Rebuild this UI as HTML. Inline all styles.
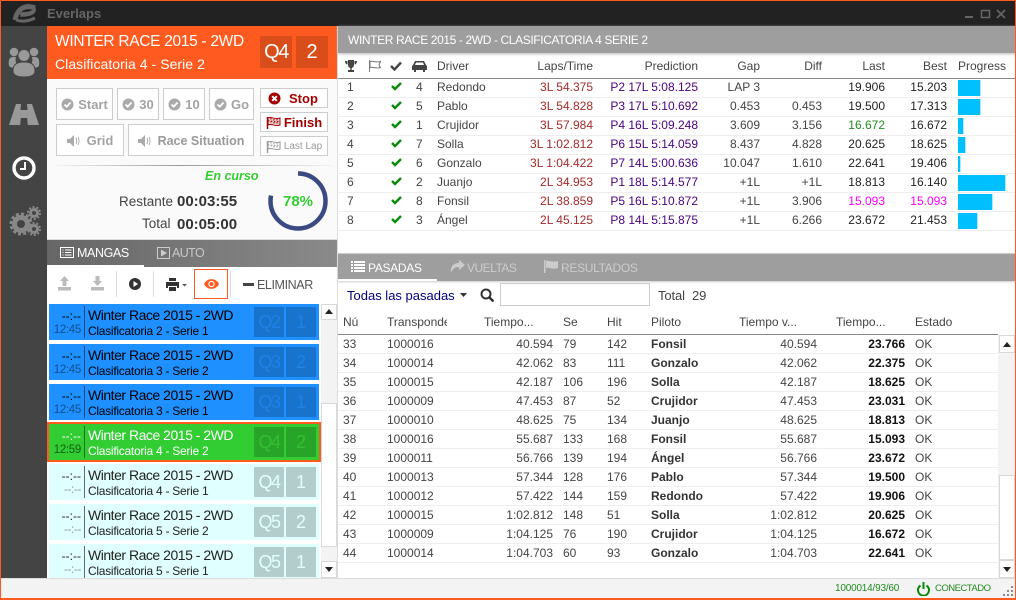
<!DOCTYPE html>
<html><head><meta charset="utf-8"><style>
*{box-sizing:border-box;margin:0;padding:0}
html,body{width:1016px;height:600px;overflow:hidden;background:#fff}
body{position:relative;font:12px "Liberation Sans",sans-serif;color:#444}
.a{position:absolute;white-space:nowrap}
.btn{position:absolute;background:#fff;border:1px solid #ccc;color:#a3a3a3;font-weight:bold;font-size:13px;display:flex;align-items:center;justify-content:center;white-space:nowrap;padding-top:1px}
.row{position:absolute;left:338px;height:19px;line-height:17px;border-bottom:1px solid #eee}
.row span,.h span{position:absolute;top:0;white-space:nowrap}
.t{width:678px}
.p{width:660px;line-height:18px}
.t .c1{left:9px}
.t svg{position:absolute;left:53px;top:3px}
.t .c2{left:78px}
.t .c3{left:99px}
.t .c4{right:423px;color:#a52a2a}
.t .c5{right:318px;color:#4b0082}
.t .c6{right:256px}
.t .c7{right:194px}
.t .c8{right:131px;color:#222}
.t .c9{right:69px;color:#222}
.t i{position:absolute;left:620px;top:1px;height:16px;background:#00bfff;border-right:1px solid #aee8ff}
.p span:nth-child(1){left:5px}
.p span:nth-child(2){left:49px}
.p span:nth-child(3){right:445px}
.p span:nth-child(4){left:225px}
.p span:nth-child(5){left:269px}
.p span:nth-child(6){left:313px;font-weight:bold;color:#333}
.p span:nth-child(7){right:181px}
.p span:nth-child(8){right:93px;font-weight:bold;color:#111}
.p span:nth-child(9){left:577px}
.h span{color:#444;line-height:16px}
.it{position:absolute;left:49px;width:270px;height:36px;overflow:hidden}
.it b{position:absolute;font-weight:normal;white-space:nowrap}
.it .x{left:0;width:32px;top:5px;text-align:right;font-size:12px}
.it .y{left:0;width:32px;top:20px;text-align:right;font-size:11.5px;letter-spacing:-.3px}
.it .l{left:35px;top:2px;width:1px;height:32px}
.it .n{left:39px;top:3px;font-size:14px;letter-spacing:-.48px}
.it .s{left:39px;top:20px;font-size:12px;letter-spacing:-.27px}
.it .q{top:3px;left:205px;width:30px;height:30px;text-align:center;font-size:18px;line-height:30px;letter-spacing:-1.5px}
.it .m{top:3px;left:237px;width:30px;height:30px;text-align:center;font-size:18px;line-height:30px}
.bl{background:#1e90ff;color:#000}.bl .y{color:#134f8c}.bl .l{background:#0f4a85}.bl .q,.bl .m{background:#1873cc;color:#1e82e8}
.gr{background:#32cd32;color:#fff}.gr .y{color:#156015}.gr .l{background:#197019}.gr .q,.gr .m{background:#28a428;color:#32c032}
.li{background:#e0ffff;color:#222}.li .y{color:#8a9a9a}.li .l{background:#667}.li .q,.li .m{background:#b3cccc;color:#e0ffff}
.sb{position:absolute;background:#fff;border:1px solid #d8d8d8}
</style></head><body>

<!-- title bar -->
<div class="a" style="left:0;top:0;width:1016px;height:26px;background:#222"></div>
<svg class="a" style="left:12px;top:4px" width="26" height="19" viewBox="0 0 26 19" fill="none" stroke="#666"><path d="M23 4C13 0 5 5 3 16" stroke-width="5"/><path d="M9 9C14 9 20 8 23 5C24 10 17 12 9 12Z" fill="#666" stroke-width="1.500"/><path d="M4 16C10 18 17 17 23 14" stroke-width="3"/></svg>
<div class="a" style="left:47px;top:6px;font-size:13px;font-weight:bold;color:#666">Everlaps</div>
<svg class="a" style="left:965px;top:8px" width="46" height="12" viewBox="0 0 46 12" fill="none" stroke="#666"><rect x="0" y="8" width="8" height="2" fill="#666" stroke="none"/><rect x="16.500" y="2.500" width="8" height="7" stroke-width="1.500"/><path d="M32 2L40 10M40 2L32 10" stroke-width="1.600"/></svg>

<!-- sidebar -->
<div class="a" style="left:0;top:26px;width:47px;height:552px;background:#444"></div>
<svg class="a" style="left:8px;top:46px" width="32" height="32" viewBox="0 0 32 32" fill="#999"><circle cx="6" cy="6" r="4.300"/><circle cx="26" cy="6" r="4.300"/><path d="M1 20C0 13 2 11 5 11L8 11C7 15 8 18 10 19L7 22C4 22 2 21 1 20ZM31 20C32 13 30 11 27 11L24 11C25 15 24 18 22 19L25 22C28 22 30 21 31 20Z"/><circle cx="16" cy="9.500" r="6" stroke="#444"/><path d="M16 16C8 16 5 19 5 25C5 29 9 31 16 31C23 31 27 29 27 25C27 19 24 16 16 16Z" stroke="#444"/></svg>
<svg class="a" style="left:9px;top:104px" width="30" height="22" viewBox="0 0 30 22" fill="#999"><path d="M7 0H12L11.500 6H18.500L18 0H23L30 21H18.800L18.200 14H11.800L11.200 21H0Z"/></svg>
<svg class="a" style="left:12px;top:156px" width="24" height="24" viewBox="0 0 24 24" fill="none"><circle cx="12" cy="12" r="10" stroke="#fff" stroke-width="3.400"/><path d="M13 6V13H8" stroke="#fff" stroke-width="2"/></svg>
<svg class="a" style="left:9px;top:206px" width="32" height="30" viewBox="0 0 32 30" fill="none" stroke="#888"><circle cx="12" cy="18" r="6.500" stroke-width="5"/><circle cx="12" cy="18" r="10" stroke-width="3" stroke-dasharray="3 2.200"/><circle cx="25" cy="7" r="3.500" stroke-width="3"/><circle cx="25" cy="7" r="6" stroke-width="2" stroke-dasharray="2 1.800"/><circle cx="25" cy="23" r="3.500" stroke-width="3"/><circle cx="25" cy="23" r="6" stroke-width="2" stroke-dasharray="2 1.800"/></svg>

<!-- orange header -->
<div class="a" style="left:47px;top:26px;width:290px;height:53px;background:#ff5a1f"></div>
<div class="a" style="left:55px;top:33px;font-size:15.500px;color:#fff;letter-spacing:-.3px">WINTER RACE 2015 - 2WD</div>
<div class="a" style="left:55px;top:56px;font-size:14px;color:#fff;letter-spacing:.05px">Clasificatoria 4 - Serie 2</div>
<div class="a" style="left:260px;top:36px;width:32px;height:32px;background:#d94d1a;color:#fff;font-size:20px;text-align:center;line-height:33px;letter-spacing:-1.5px">Q4</div>
<div class="a" style="left:296px;top:36px;width:32px;height:32px;background:#d94d1a;color:#fff;font-size:20px;text-align:center;line-height:33px">2</div>

<!-- control panel -->
<div class="a" style="left:47px;top:79px;width:290px;height:161px;background:#fafafa;border-bottom:1px solid #ddd"></div>
<div class="btn" style="left:56px;top:88px;width:57px;height:32px"><svg width="13" height="13" viewBox="0 0 13 13" style="margin-right:4px"><circle cx="6.500" cy="6.500" r="6" fill="#aaa"/><path d="M3.500 6.500L5.700 8.700L9.500 4.500" stroke="#fff" stroke-width="1.800" fill="none"/></svg>Start</div>
<div class="btn" style="left:117px;top:88px;width:42px;height:32px"><svg width="13" height="13" viewBox="0 0 13 13" style="margin-right:4px"><circle cx="6.500" cy="6.500" r="6" fill="#aaa"/><path d="M3.500 6.500L5.700 8.700L9.500 4.500" stroke="#fff" stroke-width="1.800" fill="none"/></svg>30</div>
<div class="btn" style="left:163px;top:88px;width:42px;height:32px"><svg width="13" height="13" viewBox="0 0 13 13" style="margin-right:4px"><circle cx="6.500" cy="6.500" r="6" fill="#aaa"/><path d="M3.500 6.500L5.700 8.700L9.500 4.500" stroke="#fff" stroke-width="1.800" fill="none"/></svg>10</div>
<div class="btn" style="left:209px;top:88px;width:45px;height:32px"><svg width="13" height="13" viewBox="0 0 13 13" style="margin-right:4px"><circle cx="6.500" cy="6.500" r="6" fill="#aaa"/><path d="M3.500 6.500L5.700 8.700L9.500 4.500" stroke="#fff" stroke-width="1.800" fill="none"/></svg>Go</div>
<div class="btn" style="left:56px;top:124px;width:68px;height:32px"><svg width="14" height="12" viewBox="0 0 14 12" style="margin-right:6px" fill="none" stroke="#aaa"><path d="M0 4H3L7 0V12L3 8H0Z" fill="#aaa" stroke="none"/><path d="M9 3C10 5 10 7 9 9M11 2C12.500 5 12.500 7 11 10"/></svg>Grid</div>
<div class="btn" style="left:128px;top:124px;width:126px;height:32px;color:#999;font-size:12.500px"><svg width="14" height="12" viewBox="0 0 14 12" style="margin-right:6px" fill="none" stroke="#aaa"><path d="M0 4H3L7 0V12L3 8H0Z" fill="#aaa" stroke="none"/><path d="M9 3C10 5 10 7 9 9M11 2C12.500 5 12.500 7 11 10"/></svg>Race Situation</div>
<div class="btn" style="left:260px;top:88px;width:68px;height:20px;color:#a50000;justify-content:flex-start;padding-left:7px"><svg width="13" height="13" viewBox="0 0 13 13" style="margin-right:8px"><circle cx="6.500" cy="6.500" r="6" fill="#a50000"/><path d="M4.200 4.200L8.800 8.800M8.800 4.200L4.200 8.800" stroke="#fff" stroke-width="2"/></svg>Stop</div>
<div class="btn" style="left:260px;top:112px;width:68px;height:20px;color:#a50000"><svg width="15" height="14" viewBox="0 0 15 14" style="margin-right:3px" fill="none" stroke="#a50000"><path d="M1.500 1V13" stroke-width="1.500"/><path d="M2 2C5 0 9 4 14 2V9C9 11 5 7 2 9Z" fill="#a50000" fill-opacity=".2"/><path d="M5 2V8M8 3V9M11 3V9M2 5C5 4 9 7 14 5" stroke-dasharray="1.500 1.500"/></svg>Finish</div>
<div class="btn" style="left:260px;top:136px;width:68px;height:20px;color:#999;font-size:10px;font-weight:normal"><svg width="15" height="14" viewBox="0 0 15 14" style="margin-right:3px" fill="none" stroke="#999"><path d="M1.500 1V13" stroke-width="1.500"/><path d="M2 2C5 0 9 4 14 2V9C9 11 5 7 2 9Z"/><path d="M5 2V8M8 3V9M11 3V9M2 5C5 4 9 7 14 5" stroke-dasharray="1.500 1.500"/></svg>Last Lap</div>
<div class="a" style="left:56px;top:165px;width:278px;height:1px;background:linear-gradient(90deg,#f4f4f4,#999 45%,#f4f4f4)"></div>
<div class="a" style="left:205px;top:169px;font-size:12.500px;font-weight:bold;font-style:italic;color:#32cd32">En curso</div>
<div class="a" style="left:119px;top:194px;font-size:13.500px;color:#444">Restante</div>
<div class="a" style="left:177px;top:193px;font-size:15px;font-weight:bold;color:#333">00:03:55</div>
<div class="a" style="left:142px;top:216px;font-size:13.500px;color:#444">Total</div>
<div class="a" style="left:177px;top:216px;font-size:15px;font-weight:bold;color:#333">00:05:00</div>
<svg class="a" style="left:268px;top:171px" width="60" height="60" viewBox="0 0 60 60"><circle cx="30" cy="30" r="27.500" fill="none" stroke="#3b4a82" stroke-width="4.500" stroke-dasharray="134.800 38" transform="rotate(-90 30 30)"/></svg>
<div class="a" style="left:268px;top:193px;width:60px;text-align:center;font-size:15px;font-weight:bold;color:#32cd32">78%</div>

<!-- mangas tabs -->
<div class="a" style="left:47px;top:240px;width:290px;height:27px;background:linear-gradient(90deg,#666,#8a8a8a)"></div>
<div class="a" style="left:47px;top:265px;width:97px;height:2px;background:#fff"></div>
<svg class="a" style="left:60px;top:247px" width="14" height="11" viewBox="0 0 14 11" fill="none" stroke="#fff"><rect x=".5" y=".5" width="13" height="10"/><path d="M2.500 3H3.500M5 3H11.500M2.500 5.500H3.500M5 5.500H11.500M2.500 8H3.500M5 8H11.500"/></svg>
<div class="a" style="left:77px;top:246px;font-size:12.500px;color:#fff;letter-spacing:-.4px">MANGAS</div>
<svg class="a" style="left:157px;top:247px" width="13" height="12" viewBox="0 0 13 12"><rect x=".5" y=".5" width="12" height="11" fill="none" stroke="#ccc"/><path d="M4 2.500V9.500L10 6Z" fill="#ccc"/></svg>
<div class="a" style="left:172px;top:246px;font-size:12.500px;color:#c8c8c8;letter-spacing:-.6px">AUTO</div>

<!-- toolbar -->
<div class="a" style="left:47px;top:267px;width:290px;height:311px;background:#fff"></div>
<svg class="a" style="left:57px;top:276px" width="15" height="15" viewBox="0 0 15 15" fill="#bbb"><path d="M7.500 0L12 5H9.500V10H5.500V5H3Z"/><rect x="1" y="11" width="13" height="3.500"/></svg>
<svg class="a" style="left:90px;top:276px" width="15" height="15" viewBox="0 0 15 15" fill="#bbb"><path d="M7.500 10L12 5H9.500V0H5.500V5H3Z"/><rect x="1" y="11" width="13" height="3.500"/></svg>
<div class="a" style="left:116px;top:271px;width:1px;height:26px;background:#ddd"></div>
<svg class="a" style="left:129px;top:278px" width="12" height="12" viewBox="0 0 12 12"><circle cx="6" cy="6" r="6" fill="#333"/><path d="M4.500 3L9 6L4.500 9Z" fill="#fff"/></svg>
<div class="a" style="left:153px;top:271px;width:1px;height:26px;background:#ddd"></div>
<svg class="a" style="left:166px;top:278px" width="22" height="13" viewBox="0 0 22 13"><path d="M3 0H10V3H3ZM0 4H13V10H11V8H2V10H0ZM3 9H10V13H3Z" fill="#333"/><path d="M16 6H21L18.500 8.500Z" fill="#555"/></svg>
<div class="a" style="left:194px;top:269px;width:34px;height:30px;border:1px solid #ff5a1f"></div>
<svg class="a" style="left:204px;top:279px" width="15" height="10" viewBox="0 0 15 10"><path d="M0 5C3-1.500 12-1.500 15 5C12 11.500 3 11.500 0 5Z" fill="#ff5a1f"/><circle cx="7.500" cy="5" r="3.200" fill="#fff"/><circle cx="7.500" cy="5" r="2" fill="#ff5a1f"/></svg>
<div class="a" style="left:230px;top:271px;width:1px;height:26px;background:#ddd"></div>
<div class="a" style="left:243px;top:283px;width:11px;height:3px;background:#444"></div>
<div class="a" style="left:257px;top:278px;font-size:12.500px;color:#555;letter-spacing:-.4px">ELIMINAR</div>

<!-- list -->
<div class="it bl" style="top:304px"><b class="x">--:--</b><b class="y">12:45</b><b class="l"></b><b class="n">Winter Race 2015 - 2WD</b><b class="s">Clasificatoria 2 - Serie 1</b><b class="q">Q2</b><b class="m">1</b></div>
<div class="it bl" style="top:344px"><b class="x">--:--</b><b class="y">12:45</b><b class="l"></b><b class="n">Winter Race 2015 - 2WD</b><b class="s">Clasificatoria 3 - Serie 2</b><b class="q">Q3</b><b class="m">2</b></div>
<div class="it bl" style="top:384px"><b class="x">--:--</b><b class="y">12:45</b><b class="l"></b><b class="n">Winter Race 2015 - 2WD</b><b class="s">Clasificatoria 3 - Serie 1</b><b class="q">Q3</b><b class="m">1</b></div>
<div class="a" style="left:47px;top:422px;width:274px;height:40px;border:2px solid #ff5a1f"></div>
<div class="it gr" style="top:424px"><b class="x">--:--</b><b class="y">12:59</b><b class="l"></b><b class="n">Winter Race 2015 - 2WD</b><b class="s">Clasificatoria 4 - Serie 2</b><b class="q">Q4</b><b class="m">2</b></div>
<div class="it li" style="top:464px"><b class="x">--:--</b><b class="y">--:--</b><b class="l"></b><b class="n">Winter Race 2015 - 2WD</b><b class="s">Clasificatoria 4 - Serie 1</b><b class="q">Q4</b><b class="m">1</b></div>
<div class="it li" style="top:504px"><b class="x">--:--</b><b class="y">--:--</b><b class="l"></b><b class="n">Winter Race 2015 - 2WD</b><b class="s">Clasificatoria 5 - Serie 2</b><b class="q">Q5</b><b class="m">2</b></div>
<div class="it li" style="top:544px;height:34px"><b class="x">--:--</b><b class="y">--:--</b><b class="l"></b><b class="n">Winter Race 2015 - 2WD</b><b class="s">Clasificatoria 5 - Serie 1</b><b class="q">Q5</b><b class="m">1</b></div>
<div class="a" style="left:321px;top:304px;width:16px;height:274px;background:#f3f3f3"></div>
<div class="sb" style="left:321px;top:304px;width:16px;height:16px"></div>
<div class="sb" style="left:321px;top:403px;width:16px;height:144px"></div>
<div class="sb" style="left:321px;top:561px;width:16px;height:17px"></div>
<svg class="a" style="left:325px;top:309px" width="8" height="5"><path d="M0 5H8L4 0Z" fill="#222"/></svg>
<svg class="a" style="left:325px;top:567px" width="8" height="5"><path d="M0 0H8L4 5Z" fill="#222"/></svg>

<!-- right header -->
<div class="a" style="left:337px;top:26px;width:1px;height:552px;background:#ddd"></div>
<div class="a" style="left:338px;top:26px;width:678px;height:27px;background:#9e9e9e;box-shadow:0 1px 3px #bbb"></div>
<div class="a" style="left:348px;top:33px;font-size:12px;color:#fff;letter-spacing:-.38px">WINTER RACE 2015 - 2WD - CLASIFICATORIA 4 SERIE 2</div>

<!-- top table head -->
<div class="h a" style="left:338px;top:58px;width:678px;height:21px;border-bottom:1px solid #888">
<svg style="position:absolute;left:7px;top:2px" width="12" height="12" viewBox="0 0 12 12" fill="#444"><path d="M3 0H9V5C9 7 7 8 6.700 8V10H9V12H3V10H5.300V8C5 8 3 7 3 5ZM0 1H2.500V4.500C1 4.500 0 3 0 1ZM12 1H9.500V4.500C11 4.500 12 3 12 1Z"/></svg>
<svg style="position:absolute;left:30px;top:2px" width="13" height="12" viewBox="0 0 13 12" fill="none" stroke="#777"><path d="M1.500 0V12M2 1.500C5 .5 8 3 12.500 1.500L11 5L12.500 7.500C8 9 5 6.500 2 7.500Z"/></svg>
<svg style="position:absolute;left:52px;top:3px" width="12" height="10" viewBox="0 0 12 10"><path d="M1 5L4.500 8.500L11 1.500" stroke="#444" stroke-width="2.400" fill="none"/></svg>
<svg style="position:absolute;left:74px;top:2px" width="15" height="12" viewBox="0 0 15 12" fill="#444"><path fill-rule="evenodd" d="M3 1H12L14 5L15 6V10H13V12H11V10H4V12H2V10H0V6L1 5ZM4 2.500L3 5H12L11 2.500Z"/></svg>
<span style="left:99px">Driver</span><span style="right:423px">Laps/Time</span><span style="right:318px">Prediction</span><span style="right:256px">Gap</span><span style="right:194px">Diff</span><span style="right:131px">Last</span><span style="right:69px">Best</span><span style="left:620px">Progress</span></div>

<!-- top table rows -->
<div class="row t" style="top:79px"><span class="c1">1</span><svg width="11" height="9" viewBox="0 0 11 9"><path d="M1 4L4 7L10 1" stroke="#0a8a0a" stroke-width="2.400" fill="none"/></svg><span class="c2">4</span><span class="c3">Redondo</span><span class="c4">3L 54.375</span><span class="c5">P2 17L 5:08.125</span><span class="c6">LAP 3</span><span class="c8">19.906</span><span class="c9">15.203</span><i style="width:23px"></i></div>
<div class="row t" style="top:98px"><span class="c1">2</span><svg width="11" height="9" viewBox="0 0 11 9"><path d="M1 4L4 7L10 1" stroke="#0a8a0a" stroke-width="2.400" fill="none"/></svg><span class="c2">5</span><span class="c3">Pablo</span><span class="c4">3L 54.828</span><span class="c5">P3 17L 5:10.692</span><span class="c6">0.453</span><span class="c7">0.453</span><span class="c8">19.500</span><span class="c9">17.313</span><i style="width:23px"></i></div>
<div class="row t" style="top:117px"><span class="c1">3</span><svg width="11" height="9" viewBox="0 0 11 9"><path d="M1 4L4 7L10 1" stroke="#0a8a0a" stroke-width="2.400" fill="none"/></svg><span class="c2">1</span><span class="c3">Crujidor</span><span class="c4">3L 57.984</span><span class="c5">P4 16L 5:09.248</span><span class="c6">3.609</span><span class="c7">3.156</span><span class="c8" style="color:#228b22">16.672</span><span class="c9">16.672</span><i style="width:6px"></i></div>
<div class="row t" style="top:136px"><span class="c1">4</span><svg width="11" height="9" viewBox="0 0 11 9"><path d="M1 4L4 7L10 1" stroke="#0a8a0a" stroke-width="2.400" fill="none"/></svg><span class="c2">7</span><span class="c3">Solla</span><span class="c4">3L 1:02.812</span><span class="c5">P6 15L 5:14.059</span><span class="c6">8.437</span><span class="c7">4.828</span><span class="c8">20.625</span><span class="c9">18.625</span><i style="width:8px"></i></div>
<div class="row t" style="top:155px"><span class="c1">5</span><svg width="11" height="9" viewBox="0 0 11 9"><path d="M1 4L4 7L10 1" stroke="#0a8a0a" stroke-width="2.400" fill="none"/></svg><span class="c2">6</span><span class="c3">Gonzalo</span><span class="c4">3L 1:04.422</span><span class="c5">P7 14L 5:00.636</span><span class="c6">10.047</span><span class="c7">1.610</span><span class="c8">22.641</span><span class="c9">19.406</span><i style="width:3px"></i></div>
<div class="row t" style="top:174px"><span class="c1">6</span><svg width="11" height="9" viewBox="0 0 11 9"><path d="M1 4L4 7L10 1" stroke="#0a8a0a" stroke-width="2.400" fill="none"/></svg><span class="c2">2</span><span class="c3">Juanjo</span><span class="c4">2L 34.953</span><span class="c5">P1 18L 5:14.577</span><span class="c6">+1L</span><span class="c7">+1L</span><span class="c8">18.813</span><span class="c9">16.140</span><i style="width:48px"></i></div>
<div class="row t" style="top:193px"><span class="c1">7</span><svg width="11" height="9" viewBox="0 0 11 9"><path d="M1 4L4 7L10 1" stroke="#0a8a0a" stroke-width="2.400" fill="none"/></svg><span class="c2">8</span><span class="c3">Fonsil</span><span class="c4">2L 38.859</span><span class="c5">P5 16L 5:10.872</span><span class="c6">+1L</span><span class="c7">3.906</span><span class="c8" style="color:#f0f">15.093</span><span class="c9" style="color:#f0f">15.093</span><i style="width:35px"></i></div>
<div class="row t" style="top:212px"><span class="c1">8</span><svg width="11" height="9" viewBox="0 0 11 9"><path d="M1 4L4 7L10 1" stroke="#0a8a0a" stroke-width="2.400" fill="none"/></svg><span class="c2">3</span><span class="c3">Ángel</span><span class="c4">2L 45.125</span><span class="c5">P8 14L 5:15.875</span><span class="c6">+1L</span><span class="c7">6.266</span><span class="c8">23.672</span><span class="c9">21.453</span><i style="width:20px"></i></div>

<!-- lower tabs -->
<div class="a" style="left:338px;top:253px;width:678px;height:28px;background:#9e9e9e;border-top:1px solid #ccc;box-shadow:0 1px 2px #ccc"></div>
<div class="a" style="left:338px;top:279px;width:99px;height:2px;background:#fff"></div>
<svg class="a" style="left:351px;top:261px" width="14" height="11" viewBox="0 0 14 11" fill="#fff"><path d="M0 0H2V2H0ZM3 0H14V2H3ZM0 3H2V5H0ZM3 3H14V5H3ZM0 6H2V8H0ZM3 6H14V8H3ZM0 9H2V11H0ZM3 9H14V11H3Z"/></svg>
<div class="a" style="left:368px;top:261px;font-size:12px;color:#fff;letter-spacing:-.3px">PASADAS</div>
<svg class="a" style="left:450px;top:260px" width="15" height="13" viewBox="0 0 15 13" fill="#ccc"><path d="M9 0L15 5L9 10V7C5 7 3 8 1 13C0 7 3 3 9 3Z"/></svg>
<div class="a" style="left:467px;top:261px;font-size:12px;color:#ccc;letter-spacing:-.5px">VUELTAS</div>
<svg class="a" style="left:544px;top:260px" width="14" height="13" viewBox="0 0 14 13" fill="#ccc"><path d="M0 0H1.500V13H0ZM2 1C5 0 8 3 14 1V8C8 10 5 7 2 8Z"/></svg>
<div class="a" style="left:561px;top:261px;font-size:12px;color:#ccc;letter-spacing:-.3px">RESULTADOS</div>

<!-- filter row -->
<div class="a" style="left:347px;top:288px;font-size:13px;color:#000080">Todas las pasadas</div>
<svg class="a" style="left:460px;top:293px" width="7" height="4"><path d="M0 0H7L3.500 4Z" fill="#333"/></svg>
<svg class="a" style="left:480px;top:288px" width="14" height="14" viewBox="0 0 14 14" fill="none" stroke="#333" stroke-width="2"><circle cx="6" cy="6" r="4.500"/><path d="M9.500 9.500L13.500 13.500" stroke-width="2.500"/></svg>
<div class="a" style="left:500px;top:283px;width:150px;height:23px;background:#fff;border:1px solid #ccc"></div>
<div class="a" style="left:658px;top:288px;font-size:13px;color:#444;letter-spacing:-.1px">Total&nbsp; 29</div>

<!-- lower table head -->
<div class="h a" style="left:338px;top:314px;width:660px;height:21px;border-bottom:1px solid #888">
<span style="left:5px">Nú</span><span style="left:49px;width:60px;overflow:hidden">Transponder</span><span style="left:146px">Tiempo...</span><span style="left:225px;width:15px;overflow:hidden">Sensor</span><span style="left:269px">Hit</span><span style="left:313px">Piloto</span><span style="left:401px">Tiempo v...</span><span style="left:498px">Tiempo...</span><span style="left:577px">Estado</span></div>

<!-- lower rows -->
<div class="row p" style="top:335px"><span>33</span><span>1000016</span><span>40.594</span><span>79</span><span>142</span><span>Fonsil</span><span>40.594</span><span>23.766</span><span>OK</span></div>
<div class="row p" style="top:354px"><span>34</span><span>1000014</span><span>42.062</span><span>83</span><span>111</span><span>Gonzalo</span><span>42.062</span><span>22.375</span><span>OK</span></div>
<div class="row p" style="top:373px"><span>35</span><span>1000015</span><span>42.187</span><span>106</span><span>196</span><span>Solla</span><span>42.187</span><span>18.625</span><span>OK</span></div>
<div class="row p" style="top:392px"><span>36</span><span>1000009</span><span>47.453</span><span>87</span><span>52</span><span>Crujidor</span><span>47.453</span><span>23.031</span><span>OK</span></div>
<div class="row p" style="top:411px"><span>37</span><span>1000010</span><span>48.625</span><span>75</span><span>134</span><span>Juanjo</span><span>48.625</span><span>18.813</span><span>OK</span></div>
<div class="row p" style="top:430px"><span>38</span><span>1000016</span><span>55.687</span><span>133</span><span>168</span><span>Fonsil</span><span>55.687</span><span>15.093</span><span>OK</span></div>
<div class="row p" style="top:449px"><span>39</span><span>1000011</span><span>56.766</span><span>139</span><span>194</span><span>Ángel</span><span>56.766</span><span>23.672</span><span>OK</span></div>
<div class="row p" style="top:468px"><span>40</span><span>1000013</span><span>57.344</span><span>128</span><span>176</span><span>Pablo</span><span>57.344</span><span>19.500</span><span>OK</span></div>
<div class="row p" style="top:487px"><span>41</span><span>1000012</span><span>57.422</span><span>144</span><span>159</span><span>Redondo</span><span>57.422</span><span>19.906</span><span>OK</span></div>
<div class="row p" style="top:506px"><span>42</span><span>1000015</span><span>1:02.812</span><span>148</span><span>51</span><span>Solla</span><span>1:02.812</span><span>20.625</span><span>OK</span></div>
<div class="row p" style="top:525px"><span>43</span><span>1000009</span><span>1:04.125</span><span>76</span><span>190</span><span>Crujidor</span><span>1:04.125</span><span>16.672</span><span>OK</span></div>
<div class="row p" style="top:544px"><span>44</span><span>1000014</span><span>1:04.703</span><span>60</span><span>93</span><span>Gonzalo</span><span>1:04.703</span><span>22.641</span><span>OK</span></div>

<!-- lower scrollbar -->
<div class="a" style="left:998px;top:335px;width:18px;height:243px;background:#f3f3f3"></div>
<div class="sb" style="left:999px;top:335px;width:16px;height:18px"></div>
<div class="sb" style="left:999px;top:475px;width:16px;height:85px"></div>
<div class="sb" style="left:999px;top:560px;width:16px;height:18px"></div>
<svg class="a" style="left:1003px;top:342px" width="8" height="5"><path d="M0 5H8L4 0Z" fill="#222"/></svg>
<svg class="a" style="left:1003px;top:567px" width="8" height="5"><path d="M0 0H8L4 5Z" fill="#222"/></svg>

<!-- status bar -->
<div class="a" style="left:0;top:578px;width:1016px;height:20px;background:#f3f3f3;border-top:1px solid #ddd"></div>
<div class="a" style="left:835px;top:583px;font-size:10px;letter-spacing:-.2px;color:#228b22">1000014/93/60</div>
<svg class="a" style="left:917px;top:582px" width="13" height="14" viewBox="0 0 13 14" fill="none" stroke="#0a8a0a" stroke-width="2"><path d="M3.500 3.500A5.500 5.500 0 1 0 9.500 3.500"/><path d="M6.500 0V7"/></svg>
<div class="a" style="left:935px;top:583px;font-size:9.500px;letter-spacing:-.5px;color:#228b22">CONECTADO</div>
<svg class="a" style="left:1003px;top:586px" width="11" height="11" fill="#888"><rect x="8" y="0" width="2" height="2"/><rect x="4" y="4" width="2" height="2"/><rect x="8" y="4" width="2" height="2"/><rect x="0" y="8" width="2" height="2"/><rect x="4" y="8" width="2" height="2"/><rect x="8" y="8" width="2" height="2"/></svg>

<!-- window border -->
<div class="a" style="left:0;top:0;width:1016px;height:600px;border:1px solid #ff5a1f;border-bottom-width:2px;pointer-events:none"></div>
</body></html>
